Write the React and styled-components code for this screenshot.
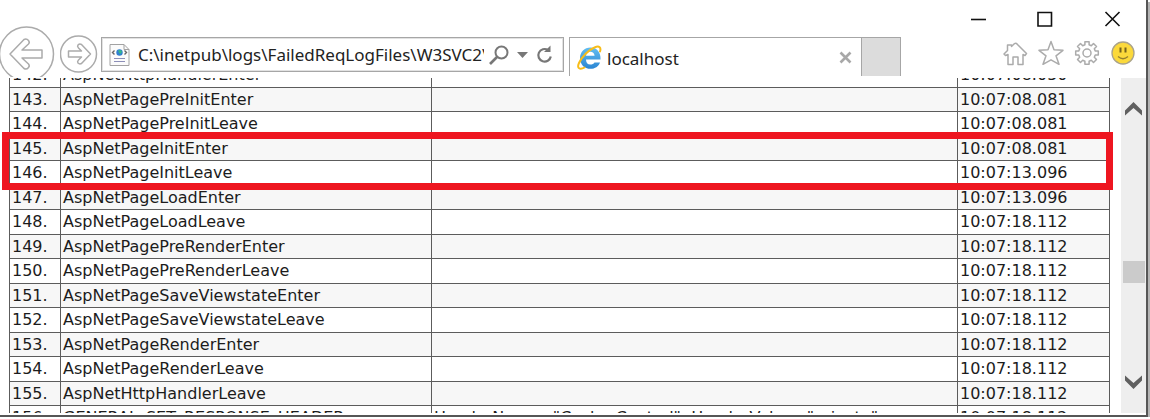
import React from "react";
import styled, { createGlobalStyle } from "styled-components";

const GlobalStyle = createGlobalStyle`
  * { box-sizing: border-box; }
  body { margin: 0; background: #fff; overflow: hidden; }
  button { border: 0; padding: 0; background: none; display: block; flex: none; }
  svg { display: block; }
`;

const Window = styled.div`
  display: flex;
  flex-direction: column;
  height: calc(100vh - 2px);
  margin-right: 2px;
  padding-bottom: 2px;
  border-right: 2px solid #565656;
  border-bottom: 2px solid #565656;
  box-shadow: 2px 2px 0 #b4b4b4;
  background: #fff;
  font-family: "Noto Sans", "Open Sans", sans-serif;
`;

const TitleBar = styled.header`
  display: flex;
  justify-content: flex-end;
  align-items: flex-end;
  gap: 44px;
  flex: none;
  height: 37px;
  padding: 0 22px 6px 0;
`;

const Toolbar = styled.div`
  display: flex;
  align-items: flex-start;
  flex: none;
  height: 41px;
`;

const NavButtons = styled.nav`
  display: flex;
  align-items: center;
  gap: 5px;
  width: 101px;
  height: 34px;
  flex: none;
`;

const BackButton = styled.button`
  height: 56px;
  clip-path: inset(0 0 5px 0);
`;

const AddressBar = styled.form`
  display: flex;
  align-items: center;
  flex: 0 1 463px;
  min-width: 0;
  height: 35px;
  margin-right: 5px;
  padding: 0 10px 0 7px;
  border: 1px solid #a6a6a6;
  box-shadow: inset 0 0 0 1px #e2e2e2;
`;

const AddressInput = styled.input`
  flex: 1;
  min-width: 0;
  height: 28px;
  margin: 0 5px 0 8px;
  padding: 0;
  border: 0;
  outline: 0;
  background: transparent;
  color: #222;
  font: 17px "Noto Sans", "Open Sans", sans-serif;
`;

const AddressActions = styled.div`
  display: flex;
  align-items: center;
  gap: 8px;
`;

const Tab = styled.div`
  display: flex;
  align-items: center;
  flex: 0 1 292px;
  min-width: 0;
  height: 39px;
  padding: 0 9px 0 7px;
  border: solid #a6a6a6;
  border-width: 1px 0 0 1px;
`;

const TabTitle = styled.span`
  flex: 1;
  padding: 4px 0 0 5px;
  color: #222;
  font-size: 17px;
  line-height: 24px;
`;

const NewTab = styled.button`
  && {
    width: 40px;
    height: 39px;
    border: 1px solid #a6a6a6;
    border-bottom: 0;
    background: #dcdcdc;
  }
`;

const Tools = styled.div`
  display: flex;
  gap: 10px;
  margin-left: auto;
  padding: 3px 10px 0 0;
`;

const Content = styled.main`
  display: flex;
  flex: 1;
  min-height: 0;
  overflow: hidden;
`;

const LogPane = styled.div`
  flex: 1;
  min-width: 0;
  padding: 0 11px 0 9px;
  overflow: hidden;
`;

/* The log is scrolled part way into its first visible row. */
const LogSheet = styled.div`
  position: relative;
  margin-top: -16px;
`;

const LogTable = styled.table`
  width: 100%;
  table-layout: fixed;
  border-collapse: collapse;
  color: #1c1c1c;
  font: 16px/22px "DejaVu Sans", sans-serif;
`;

const Column = styled.col`
  width: ${(p) => p.$width};
`;

const LogRow = styled.tr`
  height: 25px;
  &:nth-child(even) {
    height: 24px;
    background: #f7f7f7;
  }
`;

const Cell = styled.td`
  padding: 1px 0 0 2px;
  border: 1px solid #5c5c5c;
  vertical-align: top;
  white-space: nowrap;
  overflow: hidden;
`;

const Highlight = styled.div`
  position: absolute;
  top: 70px;
  left: -7px;
  right: -3px;
  height: 58px;
  border: 7px solid #ee1620;
`;

const ScrollBar = styled.div`
  display: flex;
  flex-direction: column;
  align-items: center;
  flex: none;
  width: 25px;
  padding: 24px 0;
  background: #eee;
`;

const Track = styled.div`
  flex: 1;
  display: flex;
  flex-direction: column;
`;

const Before = styled.div`
  flex: 143;
`;

const Thumb = styled.div`
  width: 22px;
  height: 22px;
  background: #cbcbcb;
`;

const After = styled.div`
  flex: 90;
`;

const rows = [
  ["142.", "AspNetHttpHandlerEnter", "", "10:07:08.050"],
  ["143.", "AspNetPagePreInitEnter", "", "10:07:08.081"],
  ["144.", "AspNetPagePreInitLeave", "", "10:07:08.081"],
  ["145.", "AspNetPageInitEnter", "", "10:07:08.081"],
  ["146.", "AspNetPageInitLeave", "", "10:07:13.096"],
  ["147.", "AspNetPageLoadEnter", "", "10:07:13.096"],
  ["148.", "AspNetPageLoadLeave", "", "10:07:18.112"],
  ["149.", "AspNetPagePreRenderEnter", "", "10:07:18.112"],
  ["150.", "AspNetPagePreRenderLeave", "", "10:07:18.112"],
  ["151.", "AspNetPageSaveViewstateEnter", "", "10:07:18.112"],
  ["152.", "AspNetPageSaveViewstateLeave", "", "10:07:18.112"],
  ["153.", "AspNetPageRenderEnter", "", "10:07:18.112"],
  ["154.", "AspNetPageRenderLeave", "", "10:07:18.112"],
  ["155.", "AspNetHttpHandlerLeave", "", "10:07:18.112"],
  ["156.", "GENERAL_SET_RESPONSE_HEADER", 'HeaderName="Cache-Control", HeaderValue="private"', "10:07:18.112"],
];

const line = { fill: "none", stroke: "#ababab", strokeWidth: 1.5, strokeLinejoin: "round" };

const BackIcon = () => (
  <svg width="55" height="56" viewBox="0 0 55 56" {...line}>
    <circle cx="26.5" cy="28" r="27" />
    <path d="M10 28 24 13.500Q26.500 12 28.500 14.500Q30 16.500 28.500 18L22 24H42V32H22L28.500 38Q30 40 28.500 41.500Q26.500 44 24 42.500Z" />
  </svg>
);

const ForwardIcon = () => (
  <svg width="38" height="38" viewBox="0 0 38 38" {...line}>
    <circle cx="18.500" cy="19" r="18" />
    <path d="M30.500 19 21.500 28.500Q19.500 29.500 18 28Q17 26.500 18.500 25L21.500 22H8.500V16H21.500L18.500 13Q17 11.500 18 10Q19.500 8.500 21.500 9.500Z" />
  </svg>
);

const PageIcon = () => (
  <svg width="21" height="24" viewBox="0 0 21 24" fill="none">
    <path d="M1 1.500H15L20 6.500V22.500H1Z" fill="#fbfbfb" stroke="#a2a2a2" />
    <path d="M15 1.500V6.500H20" stroke="#a2a2a2" />
    <circle cx="10.500" cy="9.500" r="3.200" fill="#2f7fd0" />
    <path d="M9 7.500q3-1.500 4 1q-1 3-2.500 2Z" fill="#35b88a" />
    <path d="M5.500 7.500 3.500 9.500l2 2M15.500 7.500l2 2-2 2" stroke="#666" strokeWidth="1.400" />
    <path d="M5 15.500h11M5 18.500h11" stroke="#8d8fb8" strokeWidth="1.200" />
  </svg>
);

const SearchIcon = () => (
  <svg width="20" height="20" viewBox="0 0 20 20" fill="none" stroke="#777" strokeWidth="2">
    <circle cx="12.500" cy="7.500" r="6" />
    <path d="M8.500 11.500 1 19" strokeWidth="2.600" />
  </svg>
);

const CaretIcon = () => (
  <svg width="11" height="6" viewBox="0 0 11 6">
    <path d="M0 0H11L5.500 6Z" fill="#777" />
  </svg>
);

const RefreshIcon = () => (
  <svg width="17" height="19" viewBox="0 0 17 19" fill="none" stroke="#777" strokeWidth="2.200">
    <path d="M12 5A6.300 6.300 0 1 0 14.800 11.500" />
    <path d="M8 7H14.500V0.500Z" fill="#777" stroke="none" />
  </svg>
);

const ExplorerIcon = () => (
  <svg width="25" height="25" viewBox="0 0 25 25" fill="none">
    <defs>
      <linearGradient id="ieBlue" x1="0" y1="0" x2="0" y2="1">
        <stop offset="0" stopColor="#62bdf0" />
        <stop offset="1" stopColor="#2c86d3" />
      </linearGradient>
    </defs>
    <path d="M9 14.500H23.500C24 7 19.500 2.500 13.500 2.500C7.500 2.500 3 7 3 13.200C3 19.500 7.500 23.800 13.500 23.800C18 23.800 21.500 21.500 23 17.500H17.500C16.500 19 15.300 19.600 13.300 19.600C10.500 19.600 9 17.500 9 14.500ZM9 10.800C9.500 8.200 11 6.800 13.300 6.800C15.700 6.800 17.300 8.200 17.600 10.800Z" fill="url(#ieBlue)" fillRule="evenodd" />
    <path d="M23 6.500C24.500 2 22 .5 17.500 2.500C11.500 5 5 11.500 2 18C-.5 23.500 3 25 7.500 22.500" stroke="#f8bd19" strokeWidth="2" strokeLinecap="round" />
  </svg>
);

const TabCloseIcon = () => (
  <svg width="13" height="13" viewBox="0 0 13 13" stroke="#a8a8a8" strokeWidth="2.600">
    <path d="M1.500 1.500 11.500 11.500M11.500 1.500 1.500 11.500" />
  </svg>
);

const HomeIcon = () => (
  <svg width="26" height="26" viewBox="0 0 26 26" {...line}>
    <path d="M2 14 5.500 10.500V5H9.500V6.500L11.500 4.500Q13.500 2 15.500 4.500L24.500 13.500 23 15.500 21 14.500V24.500H16V17H11V24.500H6V14.500L3.500 15.500Z" />
  </svg>
);

const StarIcon = () => (
  <svg width="26" height="26" viewBox="0 0 26 26" {...line}>
    <path d="M13 1.500 16 9.800 25 10.300 18 15.800 21 24.300 13 19.800 5 24.300 8 15.800 1 10.300 10 9.800Z" />
  </svg>
);

const gearPath = (() => {
  const points = [];
  for (let i = 0; i < 8; i += 1) {
    [[-0.25, 8.500], [-0.18, 11.500], [0.18, 11.500], [0.25, 8.500]].forEach(([turn, radius]) => {
      const a = (i * Math.PI) / 4 + turn;
      points.push(`${(13 + radius * Math.sin(a)).toFixed(1)} ${(13 - radius * Math.cos(a)).toFixed(1)}`);
    });
  }
  return `M${points.join("L")}Z`;
})();

const GearIcon = () => (
  <svg width="26" height="26" viewBox="0 0 26 26" {...line}>
    <path d={gearPath} />
    <circle cx="13" cy="13" r="4" />
  </svg>
);

const SmileIcon = () => (
  <svg width="26" height="26" viewBox="0 0 26 26" fill="none">
    <circle cx="13" cy="13" r="11" fill="#fbd93b" stroke="#a9a28a" strokeWidth="1.300" />
    <path d="M10.500 7.500v5M15.500 7.500v5" stroke="#75621c" strokeWidth="2" />
    <path d="M8 16.500Q13 21 18 16.500" stroke="#94802f" strokeWidth="1.300" />
  </svg>
);

const WindowIcon = ({ d }) => (
  <svg width="23" height="23" viewBox="0 0 23 23" fill="none" stroke="#111" strokeWidth="1.600">
    <path d={d} />
  </svg>
);

const ArrowIcon = ({ d }) => (
  <svg width="17" height="14" viewBox="0 0 17 14" fill="#606060">
    <path d={d} />
  </svg>
);

export default function App() {
  return (
    <>
      <GlobalStyle />
      <Window>
        <TitleBar>
          <button aria-label="Minimize"><WindowIcon d="M4 11.500H19" /></button>
          <button aria-label="Maximize"><WindowIcon d="M4 4.500H17.500V18H4Z" /></button>
          <button aria-label="Close"><WindowIcon d="M4.500 4 18.500 18M18.500 4 4.500 18" /></button>
        </TitleBar>
        <Toolbar>
          <NavButtons>
            <BackButton aria-label="Back"><BackIcon /></BackButton>
            <button aria-label="Forward"><ForwardIcon /></button>
          </NavButtons>
          <AddressBar onSubmit={(e) => e.preventDefault()}>
            <PageIcon />
            <AddressInput aria-label="Address" defaultValue="C:\inetpub\logs\FailedReqLogFiles\W3SVC2\" />
            <AddressActions>
              <button type="button" aria-label="Search"><SearchIcon /></button>
              <button type="button" aria-label="Show addresses"><CaretIcon /></button>
              <button type="submit" aria-label="Refresh"><RefreshIcon /></button>
            </AddressActions>
          </AddressBar>
          <Tab>
            <ExplorerIcon />
            <TabTitle>localhost</TabTitle>
            <button aria-label="Close tab"><TabCloseIcon /></button>
          </Tab>
          <NewTab aria-label="New tab" />
          <Tools>
            <button aria-label="Home"><HomeIcon /></button>
            <button aria-label="Favorites"><StarIcon /></button>
            <button aria-label="Settings"><GearIcon /></button>
            <button aria-label="Feedback"><SmileIcon /></button>
          </Tools>
        </Toolbar>
        <Content>
          <LogPane>
            <LogSheet>
              <LogTable>
                <colgroup>
                  <Column $width="51px" />
                  <Column $width="371px" />
                  <Column $width="auto" />
                  <Column $width="152px" />
                </colgroup>
                <tbody>
                  {rows.map((row) => (
                    <LogRow key={row[0]}>
                      {row.map((text, i) => (
                        <Cell key={i}>{text}</Cell>
                      ))}
                    </LogRow>
                  ))}
                </tbody>
              </LogTable>
              <Highlight />
            </LogSheet>
          </LogPane>
          <ScrollBar>
            <button aria-label="Scroll up"><ArrowIcon d="M8.500 0 17 8.500V13.500L8.500 6 0 13.500V8.500Z" /></button>
            <Track>
              <Before />
              <Thumb />
              <After />
            </Track>
            <button aria-label="Scroll down"><ArrowIcon d="M8.500 14 17 5.500V.5L8.500 8 0 .5V5.500Z" /></button>
          </ScrollBar>
        </Content>
      </Window>
    </>
  );
}
